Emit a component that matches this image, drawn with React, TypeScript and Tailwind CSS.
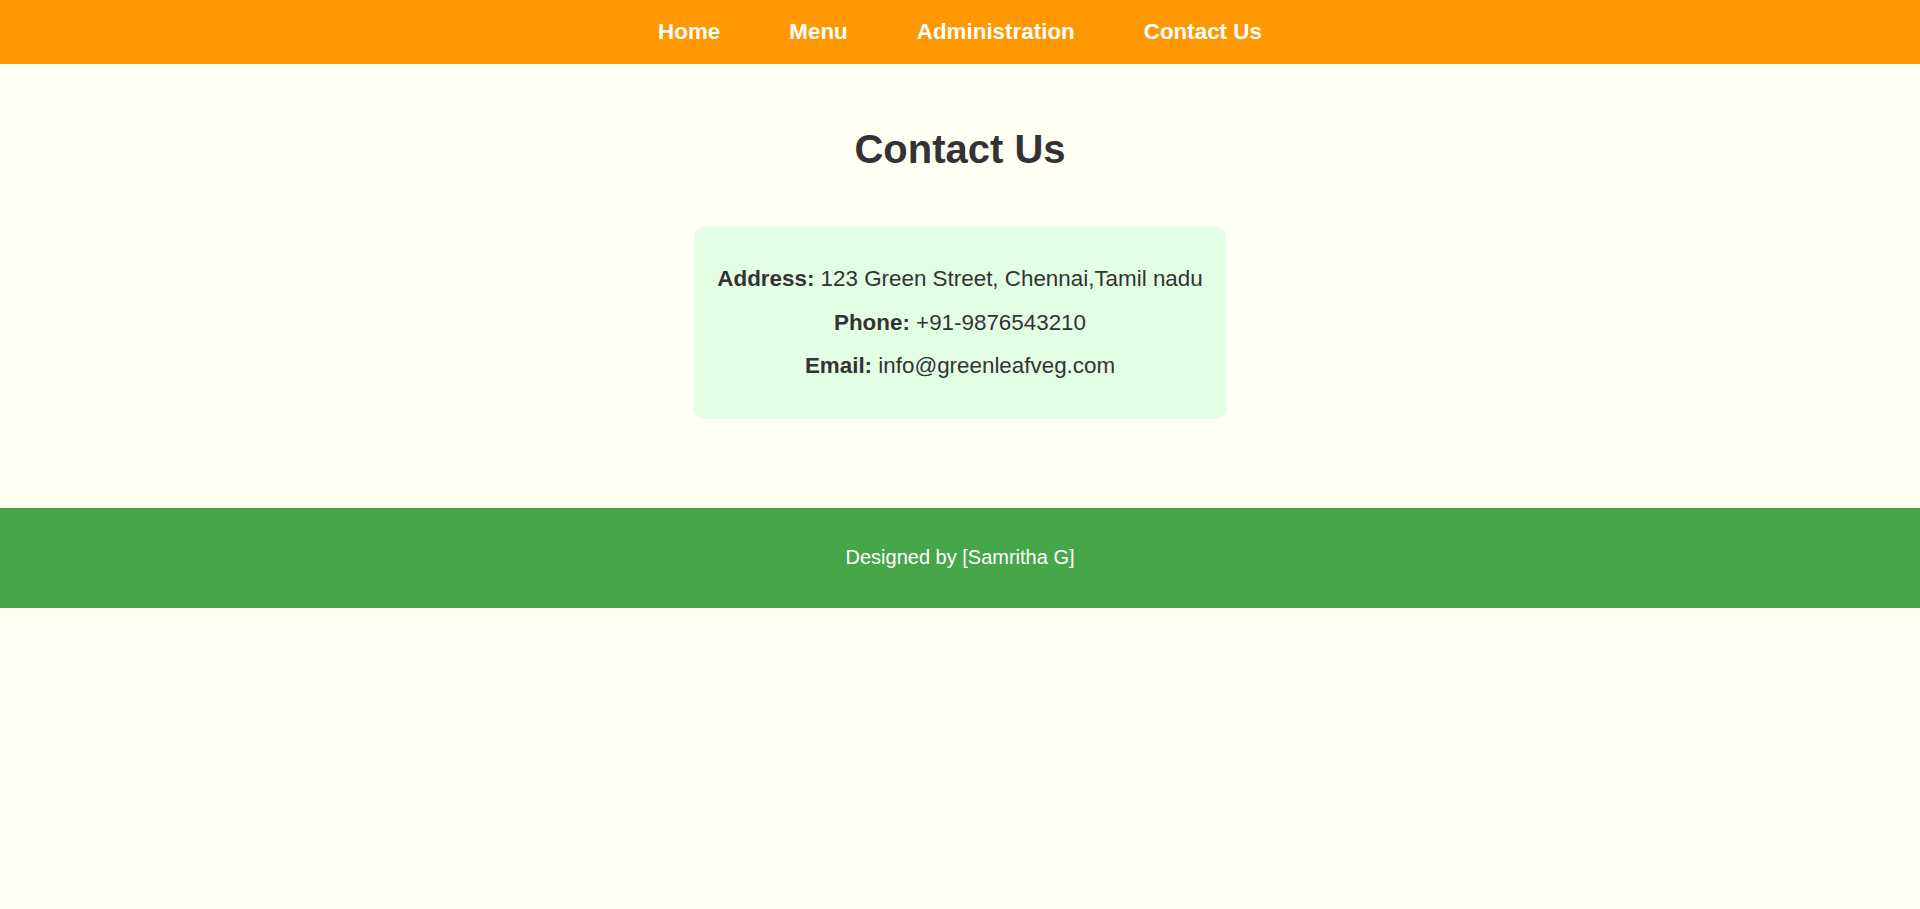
export default function App() {
  const font = { fontFamily: '"Liberation Sans", Arial, sans-serif' };
  return (
    <div className="min-h-screen bg-[#fffff4] text-[#333333]" style={font}>
      <nav className="h-[64px] bg-[#ff9800] flex items-center justify-center gap-[69px]">
        {["Home", "Menu", "Administration", "Contact Us"].map((l) => (
          <a key={l} href="#" className="text-white font-bold text-[22.4px] leading-none">
            {l}
          </a>
        ))}
      </nav>
      <main className="flex flex-col items-center pt-[62px] pb-[89px]">
        <h1 className="text-[40px] font-bold leading-[46px] text-[#333333]">Contact Us</h1>
        <div className="mt-[55px] w-[532px] h-[192px] bg-[#e3ffe3] rounded-[10px] px-[20px] py-[20px] flex flex-col items-center">
          <p className="text-[22.4px] leading-[25.7px] mt-[19px] whitespace-nowrap">
            <strong>Address:</strong> 123 Green Street, Chennai,Tamil nadu
          </p>
          <p className="text-[22.4px] leading-[25.7px] mt-[18px] whitespace-nowrap">
            <strong>Phone:</strong> +91-9876543210
          </p>
          <p className="text-[22.4px] leading-[25.7px] mt-[18px] whitespace-nowrap">
            <strong>Email:</strong> info@greenleafveg.com
          </p>
        </div>
      </main>
      <footer className="h-[100px] bg-[#47a64a] flex items-center justify-center">
        <p className="text-white text-[20px] leading-[23px] mb-[2px]">Designed by [Samritha G]</p>
      </footer>
    </div>
  );
}
